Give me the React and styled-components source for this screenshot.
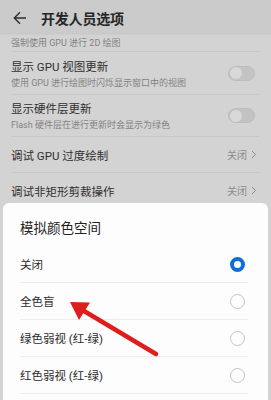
import React from 'react'
import styled, { createGlobalStyle } from 'styled-components'

const Global = createGlobalStyle`
  html, body { margin: 0; padding: 0; }
  body {
    background: #d3d3d3;
    font-family: Roboto, "Noto Sans CJK SC", sans-serif;
    width: 271px;
    height: 400px;
    overflow: hidden;
  }
`

const settings = [
  { title: '显示 GPU 视图更新', sub: '使用 GPU 进行绘图时闪烁显示窗口中的视图', toggle: true, h: 43 },
  { title: '显示硬件层更新', sub: 'Flash 硬件层在进行更新时会显示为绿色', toggle: true, h: 42 },
  { title: '调试 GPU 过度绘制', value: '关闭', h: 36 },
  { title: '调试非矩形剪裁操作', value: '关闭', h: 36 },
]

const options = ['关闭', '全色盲', '绿色弱视 (红-绿)', '红色弱视 (红-绿)']

const App = () => {
  return (
    <>
      <Global />
      <Page>
        <Header>
          <svg width="14" height="14" viewBox="0 0 14 14">
            <path d="M13 7H1.5M7 1.2L1.3 7L7 12.8" fill="none" stroke="#2f2f2f" strokeWidth="1.4" />
          </svg>
          <Title>开发人员选项</Title>
        </Header>
        <List>
          <Row $h={19}>
            <Sub>强制使用 GPU 进行 2D 绘图</Sub>
          </Row>
          {settings.map((s) => (
            <Row key={s.title} $h={s.h}>
              <Texts>
                <RowTitle>{s.title}</RowTitle>
                {s.sub && <Sub>{s.sub}</Sub>}
              </Texts>
              {s.toggle && <Toggle><Knob /></Toggle>}
              {s.value && (
                <Value>
                  {s.value}
                  <svg width="6" height="9" viewBox="0 0 6 9">
                    <path d="M1 1l3.5 3.5L1 8" fill="none" stroke="#8c8c8c" strokeWidth="1" />
                  </svg>
                </Value>
              )}
            </Row>
          ))}
        </List>
        <Dialog>
          <DialogTitle>模拟颜色空间</DialogTitle>
          {options.map((o, i) => (
            <Option key={o}>
              <span>{o}</span>
              <Radio $on={i === 0} />
            </Option>
          ))}
          <Arrow width="100" height="60" viewBox="0 0 100 60">
            <path d="M88 54L16 11" stroke="#e01d1d" strokeWidth="4.5" strokeLinecap="round" />
            <path d="M2 2L22 2.5L11 20Z" fill="#e01d1d" />
          </Arrow>
        </Dialog>
      </Page>
    </>
  )
}

export default App

const Page = styled.div`
  width: 271px;
  height: 400px;
  display: flex;
  flex-direction: column;
  position: relative;
  overflow: hidden;
`
const Header = styled.div`
  flex-shrink: 0;
  height: 33px;
  background: #cbcbcb;
  display: flex;
  align-items: center;
  padding: 3px 0 0 13px;
  box-sizing: border-box;
  gap: 14px;
  box-shadow: 0 1px 2px rgba(0,0,0,0.08);
  position: relative;
  z-index: 1;
`
const Title = styled.div`
  font-size: 14px;
  font-weight: 600;
  color: #262626;
  letter-spacing: -0.2px;
`
const List = styled.div`
  flex-shrink: 0;
  padding: 0 12px 0 11px;
`
const Row = styled.div`
  flex-shrink: 0;
  display: flex;
  align-items: center;
  justify-content: space-between;
  height: ${(p) => p.$h}px;
  box-sizing: border-box;
  border-bottom: 1px solid #c8c8c8;
`
const Texts = styled.div`
  display: flex;
  flex-direction: column;
  gap: 2px;
`
const RowTitle = styled.div`
  font-size: 11.5px;
  color: #303030;
`
const Sub = styled.div`
  font-size: 9px;
  color: #838383;
`
const Toggle = styled.div`
  width: 27px;
  height: 15px;
  border-radius: 8px;
  background: #c3c3c3;
  border: 1px solid #bdbdbd;
  box-sizing: border-box;
  display: flex;
  align-items: center;
  padding-left: 1px;
  margin-right: 4px;
`
const Knob = styled.div`
  width: 12px;
  height: 12px;
  border-radius: 50%;
  background: #d9d9d9;
`
const Value = styled.div`
  font-size: 10px;
  color: #8c8c8c;
  display: flex;
  align-items: center;
  gap: 4px;
  margin-right: 2px;
`
const Dialog = styled.div`
  position: absolute;
  top: 203px;
  left: 3px;
  right: 3px;
  bottom: 0;
  background: #fdfdfd;
  border-radius: 6px 6px 0 0;
  padding: 4px 20px 0 17px;
`
const DialogTitle = styled.div`
  font-size: 13.5px;
  color: #222;
  height: 39px;
  display: flex;
  align-items: center;
`
const Option = styled.div`
  height: 37px;
  box-sizing: border-box;
  display: flex;
  align-items: center;
  justify-content: space-between;
  border-bottom: 1px solid #ececec;
  font-size: 11.5px;
  color: #2b2b2b;
`
const Radio = styled.div`
  width: 15px;
  height: 15px;
  border-radius: 50%;
  box-sizing: border-box;
  border: ${(p) => (p.$on ? '4px solid #0b6fd6' : '1px solid #c4c4c4')};
  margin-right: 3px;
`
const Arrow = styled.svg`
  position: absolute;
  left: 65px;
  top: 97px;
`
